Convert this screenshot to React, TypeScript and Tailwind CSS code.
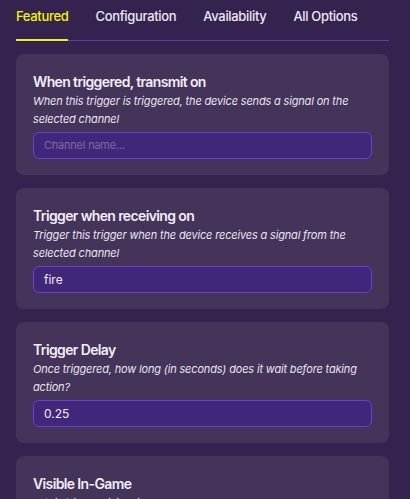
import React from 'react';

const tabs = ['Featured', 'Configuration', 'Availability', 'All Options'];

const options = [
  {
    title: 'When triggered, transmit on',
    desc: 'When this trigger is triggered, the device sends a signal on the selected channel',
    value: '',
    placeholder: 'Channel name...',
  },
  {
    title: 'Trigger when receiving on',
    desc: 'Trigger this trigger when the device receives a signal from the selected channel',
    value: 'fire',
    placeholder: 'Channel name...',
  },
  {
    title: 'Trigger Delay',
    desc: 'Once triggered, how long (in seconds) does it wait before taking action?',
    value: '0.25',
    placeholder: '',
  },
  {
    title: 'Visible In-Game',
    desc: 'Is this trigger visible in-game?',
    value: '',
    placeholder: '',
  },
];

export default function App() {
  return (
    <div
      className="w-[410px] h-[499px] overflow-hidden bg-[#35234f] text-white"
      style={{ fontFamily: 'Inter, "Noto Sans", sans-serif' }}
    >
      {/* Tabs */}
      <div className="ml-4 w-[373px] flex border-b border-[#5b3fa6]">
        {tabs.map((t, i) => (
          <div
            key={t}
            className={
              'whitespace-nowrap pt-[6px] pb-[13px] text-[13px] font-medium leading-[20px] tracking-[-0.025em] mr-[27px] -mb-px border-b-2 ' +
              (i === 0
                ? 'text-[#f5f500] border-[#f5f500] shadow-[0_1px_0_#1a1650]'
                : 'text-[#ece8f4] border-transparent')
            }
          >
            {t}
          </div>
        ))}
      </div>

      {/* Option cards */}
      <div className="ml-4 w-[373px] mt-[13px] flex flex-col gap-[13px]">
        {options.map((o) => (
          <div key={o.title} className="rounded-lg bg-[#443459] px-[17px] pt-[18px] pb-4">
            <p className="text-[14px] font-semibold leading-[20px] tracking-[-0.045em] text-[#f1eef6]">{o.title}</p>
            <p className="text-[11px] italic leading-[18px] tracking-[-0.015em] text-[#e9e4f0]">{o.desc}</p>
            <div className="mt-1 h-[27px] rounded-md border border-[#6b3fd0] bg-[#41277a] px-[10px] flex items-center">
              {o.value ? (
                <span className="text-[12px] text-[#f1eef6]">{o.value}</span>
              ) : (
                <span className="text-[11px] tracking-[-0.02em] text-[#7d67a8]">{o.placeholder}</span>
              )}
            </div>
          </div>
        ))}
      </div>
    </div>
  );
}
